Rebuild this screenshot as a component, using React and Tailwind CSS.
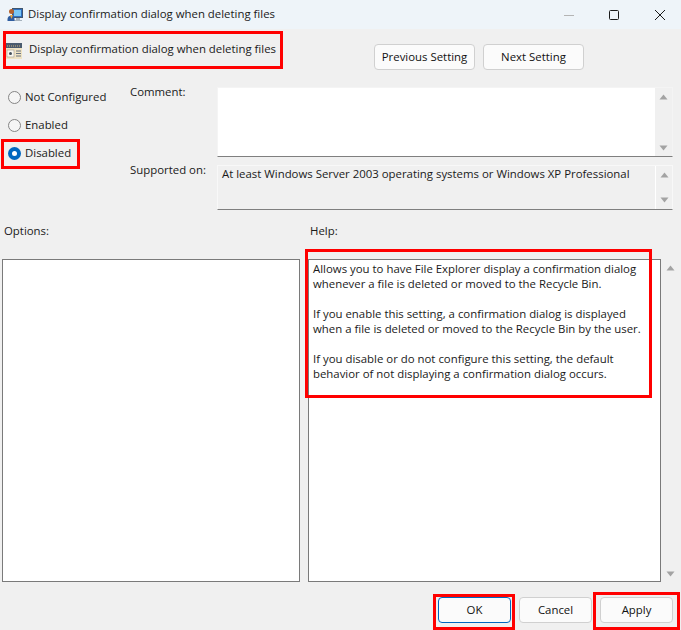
const font = { fontFamily: '"Open Sans", "Noto Sans", sans-serif' };

function Radio({ label, checked }) {
  return (
    <div className="flex items-center h-[28px] gap-[4px]">
      {checked ? (
        <span className="w-[13px] h-[13px] mt-[2px] rounded-full bg-[#0067c0] flex items-center justify-center">
          <span className="w-[5px] h-[5px] rounded-full bg-white" />
        </span>
      ) : (
        <span className="w-[13px] h-[13px] mt-[2px] rounded-full border border-[#858585] bg-[#f5f5f5]" />
      )}
      <span>{label}</span>
    </div>
  );
}

function Btn({ children, w, primary }) {
  return (
    <button className={`${w} h-[26px] pb-[2px] rounded-[4px] border ${primary ? "border-[#0067c0]" : "border-[#d0d0d0]"} bg-[#fbfbfb] text-[#111] text-center`}>
      {children}
    </button>
  );
}

function Arrows({ className }) {
  return (
    <div className={`flex flex-col items-center justify-between ${className}`}>
      <svg width="9" height="6" viewBox="0 0 9 6"><path d="M4.5 0.5 L8.5 5.5 L0.5 5.5 Z" fill="#a3a3a3" /></svg>
      <svg width="9" height="6" viewBox="0 0 9 6"><path d="M0.5 0.5 L8.5 0.5 L4.5 5.5 Z" fill="#a3a3a3" /></svg>
    </div>
  );
}

function Red({ className }) {
  return <div className={`absolute border-[3px] border-[#ff0000] pointer-events-none ${className}`} />;
}

export default function App() {
  return (
    <div style={font} className="relative w-[681px] h-[630px] bg-[#f0f0f0] text-[11.4px] leading-[15px] text-[#1a1a1a] overflow-hidden">
      <div className="h-[29px] bg-[#eef4f9] flex items-center pl-[7px]">
        <svg width="16" height="16" viewBox="0 0 16 16" className="shrink-0">
          <rect x="5.5" y="1.5" width="10" height="9" fill="#2f6fc0" stroke="#40566e" />
          <rect x="7" y="3" width="7" height="6" fill="#79c6f4" />
          <path d="M9 11 H13 V13 H15 V14 H7 V13 H9 Z" fill="#a6b2bd" />
          <circle cx="4.5" cy="4.5" r="2.5" fill="#b4622c" />
          <path d="M0.5 12 C0.5 7.5 7.5 7.5 7.5 12 V14 H0.5 Z" fill="#2f5da0" />
          <path d="M3 8 H6 L4.5 12 Z" fill="#e9a23c" />
        </svg>
        <span className="ml-[5px] mb-[2px]">Display confirmation dialog when deleting files</span>
        <div className="ml-auto flex items-center">
          <svg width="12" height="12" viewBox="0 0 12 12" className="mr-[33px]"><path d="M1 6.5 H11" stroke="#b4b4b4" /></svg>
          <svg width="12" height="12" viewBox="0 0 12 12" className="mr-[34px]"><rect x="1.5" y="1.5" width="9" height="9" rx="1" fill="none" stroke="#1a1a1a" /></svg>
          <svg width="12" height="12" viewBox="0 0 12 12" className="mr-[15px]"><path d="M1 1 L11 11 M11 1 L1 11" stroke="#1a1a1a" /></svg>
        </div>
      </div>

      <div className="h-[41px] flex items-center pl-[6px] pr-[97px]">
        <svg width="16" height="16" viewBox="0 0 16 16" className="shrink-0 mt-[2px]">
          <rect x="0" y="0" width="16" height="16" fill="#efe3c4" />
          <rect x="0" y="0" width="16" height="5" fill="#4a5b6e" />
          <path d="M1 3 H15" stroke="#cdb27a" strokeDasharray="1 1" />
          <rect x="1" y="7" width="7" height="7" fill="#f9f7ef" stroke="#a09c8c" strokeWidth="0.6" />
          <circle cx="4.5" cy="10.5" r="1.5" fill="#44505c" />
          <path d="M10 8 H15 M10 10.5 H15 M10 13 H15" stroke="#6a7480" />
        </svg>
        <span className="ml-[7px] mb-[2px]">Display confirmation dialog when deleting files</span>
        <div className="ml-auto flex gap-[8px] self-end">
          <Btn w="w-[101px]">Previous Setting</Btn>
          <Btn w="w-[101px]">Next Setting</Btn>
        </div>
      </div>

      <div className="flex pl-[8px] pr-[8px] pt-[17px]">
        <div className="w-[122px] shrink-0 -mt-[5px]">
          <Radio label="Not Configured" />
          <Radio label="Enabled" />
          <Radio label="Disabled" checked />
        </div>
        <div className="flex-1">
          <div className="flex">
            <div className="w-[87px] shrink-0 -mt-[3px]">Comment:</div>
            <div className="flex-1 h-[70px] bg-white border-b border-b-[#7f7f7f] border-t border-x border-t-[#f4f4f4] border-x-[#f4f4f4] flex justify-end">
              <Arrows className="w-[17px] bg-[#f0f0f0] pt-[6px] pb-[5px]" />
            </div>
          </div>
          <div className="flex mt-[8px]">
            <div className="w-[87px] shrink-0 -mt-[3px]">Supported on:</div>
            <div className="flex-1 h-[45px] border border-[#f8f8f8] border-b-[#7f7f7f] flex">
              <div className="flex-1 pl-[4px]">At least Windows Server 2003 operating systems or Windows XP Professional</div>
              <Arrows className="w-[17px] border-l border-l-white pt-[6px] pb-[6px]" />
            </div>
          </div>
        </div>
      </div>

      <div className="flex pl-[4px] pt-[13px] h-[49px]">
        <div className="w-[306px]">Options:</div>
        <div>Help:</div>
      </div>

      <div className="flex pl-[2px] h-[323px]">
        <div className="w-[298px] bg-white border border-[#7a7a7a]" />
        <div className="ml-[8px] w-[353px] bg-white border border-[#7a7a7a] pl-[4px] pt-[1px] whitespace-pre-line">
          {"Allows you to have File Explorer display a confirmation dialog\nwhenever a file is deleted or moved to the Recycle Bin.\n\nIf you enable this setting, a confirmation dialog is displayed\nwhen a file is deleted or moved to the Recycle Bin by the user.\n\nIf you disable or do not configure this setting, the default\nbehavior of not displaying a confirmation dialog occurs."}
        </div>
        <Arrows className="ml-[1px] w-[17px] pt-[6px] pb-[5px]" />
      </div>

      <div className="flex justify-end gap-[8px] pr-[8px] pt-[15px]">
        <Btn w="w-[73px]" primary>OK</Btn>
        <Btn w="w-[73px]">Cancel</Btn>
        <Btn w="w-[73px]">Apply</Btn>
      </div>

      <Red className="left-[3px] top-[31px] w-[280px] h-[38px]" />
      <Red className="left-[1px] top-[139px] w-[79px] h-[30px]" />
      <Red className="left-[305px] top-[249px] w-[347px] h-[149px]" />
      <Red className="left-[433px] top-[594px] w-[82px] h-[36px]" />
      <Red className="left-[593px] top-[592px] w-[87px] h-[38px]" />
    </div>
  );
}
